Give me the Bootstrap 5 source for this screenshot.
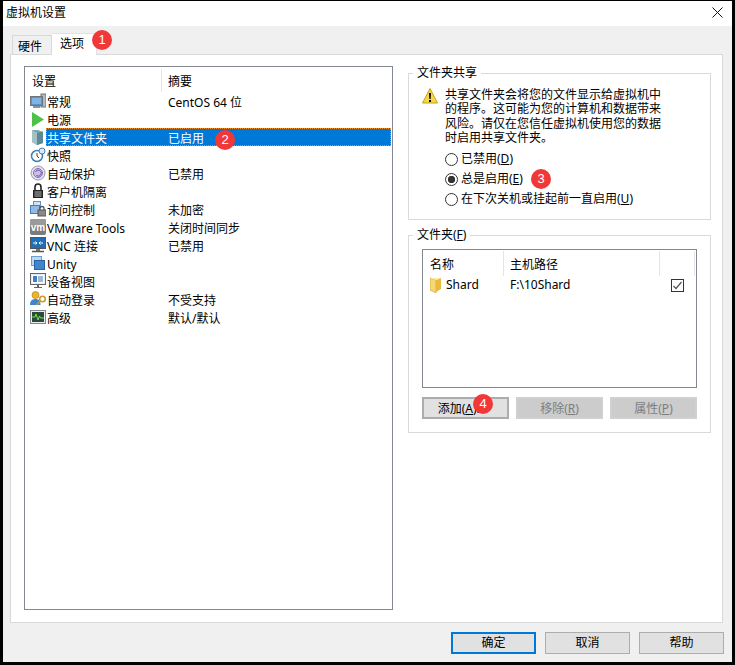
<!DOCTYPE html>
<html lang="zh-CN">
<head>
<meta charset="utf-8">
<title>虚拟机设置</title>
<link href="https://cdn.jsdelivr.net/npm/bootstrap@5.3.0/dist/css/bootstrap.min.css" rel="stylesheet">
<style>
html,body{margin:0;height:665px;overflow:hidden;background:#000}
body{font:12px/18px "Noto Sans","Noto Sans CJK SC",sans-serif;color:#000}
.vm-win{width:735px;height:665px;border:3px solid #000;border-top-width:1px;background:#f0f0f0}
.vm-title{height:25px;background:#fff;padding:0 0 2px 3px}
.vm-close{margin-right:9px}
.vm-strip{height:28px;padding-left:9px;border:0}
.vm-strip .nav-link{position:relative;display:block;height:19px;width:40px;padding:2px 0 0 5px;margin:0;border:1px solid #d9d9d9;border-bottom:0;border-radius:0;background:#f0f0f0;color:#000;font-size:12px;line-height:18px}
.vm-strip .nav-link.active{height:22px;width:45px;margin:0 0 -1px;padding:1px 0 0 8px;background:#fff;border-left:0;color:#000;z-index:2}
.vm-panel{width:713px;height:569px;margin-left:7px;padding:11px 11px 12px 13px;background:#fff;border:1px solid #d9d9d9;gap:15px}
.vm-list{width:369px;height:544px;border:1px solid #828790;background:#fff;flex:none;padding:0;border-radius:0}
.vm-head{height:25px;padding-top:2px;line-height:25px}
.vm-head1{width:137px;padding-left:7px;height:23px;border-right:1px solid #e5e5e5;margin-right:6px}
.vm-row{height:18px;padding:0 1px 0 5px;border:0;background:transparent;border-radius:0;color:#000;font-size:12px}
.vm-row svg{flex:none}
.vm-label{position:relative;flex:1;display:flex;height:18px;padding:2px 0 0 1px;line-height:18px}
.vm-name{width:121px;flex:none;white-space:nowrap}
.vm-sel{background:#0078d7;color:#fff;outline:1px dotted #f08a24;outline-offset:-1px}
.vm-right{width:303px;flex:none;gap:8px}
.vm-group{border:1px solid #d9d9d9;padding:0;margin:0;min-width:0}
.vm-g1{height:154px}
.vm-g2{height:205px}
.vm-group legend{float:none;width:auto;font-size:12px;line-height:14px;padding:0 4px;margin:0 0 0 4px}
.vm-warn{padding:8px 0 0 13px;gap:7px;line-height:14.33px}
.vm-warn p{margin:0;width:217px}
.vm-radios{padding:4px 0 0 36px}
.vm-radio{height:20px;gap:3px;position:relative;margin:0}
.vm-radio input{appearance:none;width:13px;height:13px;border:1px solid #333;border-radius:50%;background:#fff;margin:0;flex:none}
.vm-radio input:checked{background:radial-gradient(circle,#333 0 3.4px,#fff 4px)}
.vm-flist{width:275px;height:139px;margin:7px 0 0 13px;border:1px solid #828790}
.vm-fhead{height:26px;padding:1px 0 0 7px;line-height:28px}
.vm-fc{border-right:1px solid #e5e5e5;height:25px;flex:none}
.vm-fc1{width:74px}.vm-fc2{width:156px;padding-left:6px}.vm-fc3{width:35px}
.vm-frow{height:18px;padding:0 0 0 7px}
.vm-fname{width:74px;gap:5px;flex:none}
.vm-fpath{width:167px;padding-left:6px;flex:none}
.vm-check{width:13px;height:13px;border:1px solid #333;background:#fff;display:flex;flex:none}
.vm-btns{width:275px;margin:9px 0 0 13px;gap:7px}
.vm-btn{position:relative;width:85px;height:22px;padding:0;background:#e1e1e1;border:1px solid #adadad;border-radius:0;color:#000;font-size:12px;line-height:18px;flex:none}
.vm-btns .vm-btn{width:87px;border-width:2px;border-color:#adadad;line-height:18px;padding-top:1px}
.vm-btns .vm-add{padding-right:7px}
.vm-btn:disabled{opacity:1;background:#ccc;border-color:#d0d0d0;color:#7e7e7e}
.vm-default{border:2px solid #0078d7}
.vm-foot{height:39px;padding:9px 8px 0 0;gap:9px}
.vm-dot{position:absolute;width:20px;height:20px;border-radius:50%;background:#f03838;color:#fff;font:13px/20px "Liberation Sans",sans-serif;text-align:center;z-index:3}
.vm-d1{left:40px;top:-4px}
.vm-d2{left:169px;top:2px}
.vm-d3{left:86px;top:0}
.vm-d4{left:49px;top:-5px}
</style>
</head>
<body>
<div class="vm-win d-flex flex-column">
  <div class="vm-title d-flex justify-content-between align-items-center">
    <span>虚拟机设置</span>
    <svg class="vm-close" width="11" height="11" viewBox="0 0 11 11"><path d="M.5.5l10 10M10.500.5l-10 10" stroke="#111" stroke-width="1" fill="none"/></svg>
  </div>
  <ul class="nav nav-tabs vm-strip align-items-end">
    <li class="nav-item"><a class="nav-link" href="#">硬件</a></li>
    <li class="nav-item"><a class="nav-link active" href="#">选项<span class="vm-dot vm-d1">1</span></a></li>
  </ul>
  <div class="vm-panel d-flex">
    <div class="vm-list list-group">
      <div class="vm-head d-flex"><div class="vm-head1">设置</div><div>摘要</div></div>

      <div class="vm-row list-group-item d-flex">
        <svg width="16" height="18" viewBox="0 0 16 18"><rect x="11" y="2" width="5" height="13" fill="#b5b9bd" stroke="#6f7478"/><rect x="0.500" y="4.500" width="12" height="9" fill="#5c93c9" stroke="#6f7478"/><rect x="2" y="6" width="9" height="6" fill="#7fb4e6"/><rect x="3" y="14" width="7" height="2" fill="#8f9498"/></svg>
        <div class="vm-label"><span class="vm-name">常规</span><span>CentOS 64 位</span></div>
      </div>
      <div class="vm-row list-group-item d-flex">
        <svg width="16" height="18" viewBox="0 0 16 18"><path d="M2 2l12 7.500L2 17z" fill="#4fc04a"/></svg>
        <div class="vm-label"><span class="vm-name">电源</span></div>
      </div>
      <div class="vm-row list-group-item d-flex">
        <svg width="16" height="18" viewBox="0 0 16 18"><path d="M2 2h6l5 2v11l-6 2-5-3z" fill="#7fa6ac"/><path d="M7 5l6-1.500V15l-6 2z" fill="#5b8a92"/><path d="M2 2l5 3v12l-5-3z" fill="#a3c0c4"/></svg>
        <div class="vm-label vm-sel"><span class="vm-name">共享文件夹</span><span>已启用</span><span class="vm-dot vm-d2">2</span></div>
      </div>
      <div class="vm-row list-group-item d-flex">
        <svg width="16" height="18" viewBox="0 0 16 18"><circle cx="7" cy="10" r="5.500" fill="#fff" stroke="#3f7fb5" stroke-width="1.500"/><circle cx="12" cy="5" r="3" fill="#dbe9f5" stroke="#4a7ea8"/><path d="M7 7v3l2 2" stroke="#444" fill="none"/></svg>
        <div class="vm-label"><span class="vm-name">快照</span></div>
      </div>
      <div class="vm-row list-group-item d-flex">
        <svg width="16" height="18" viewBox="0 0 16 18"><circle cx="8" cy="9" r="7" fill="#e6e2ee" stroke="#9c9ca6"/><circle cx="8" cy="9" r="4.500" fill="#cbbfe6" stroke="#8a6cc0"/><path d="M5.500 8a3 3 0 1 1 1 3.500" stroke="#6f4fb0" fill="none"/></svg>
        <div class="vm-label"><span class="vm-name">自动保护</span><span>已禁用</span></div>
      </div>
      <div class="vm-row list-group-item d-flex">
        <svg width="16" height="18" viewBox="0 0 16 18"><path d="M5 8V5a3 3 0 0 1 6 0v3" fill="none" stroke="#222" stroke-width="1.600"/><rect x="3" y="8" width="10" height="8" fill="#222"/><path d="M4.500 10h7M4.500 12h7M4.500 14h7" stroke="#bbb"/></svg>
        <div class="vm-label"><span class="vm-name">客户机隔离</span></div>
      </div>
      <div class="vm-row list-group-item d-flex">
        <svg width="16" height="18" viewBox="0 0 16 18"><rect x="3.500" y="1.500" width="7" height="6" fill="#cfe3f6" stroke="#5b93cc"/><rect x="0.500" y="5.500" width="9" height="8" fill="#8fbbe6" stroke="#3f7fc0"/><path d="M10 10V8.500a2 2 0 0 1 4 0V10" fill="none" stroke="#555" stroke-width="1.300"/><rect x="8" y="10" width="8" height="6" fill="#8a8a8a" stroke="#555"/></svg>
        <div class="vm-label"><span class="vm-name">访问控制</span><span>未加密</span></div>
      </div>
      <div class="vm-row list-group-item d-flex">
        <svg width="16" height="18" viewBox="0 0 16 18"><rect x="0" y="1" width="16" height="16" rx="2" fill="#7b7b7b"/><rect x="0" y="1" width="16" height="7" rx="2" fill="#9a9a9a"/><text x="8" y="12.500" text-anchor="middle" font-family="Liberation Sans" font-size="10" font-weight="bold" fill="#fff">vm</text></svg>
        <div class="vm-label"><span class="vm-name">VMware Tools</span><span>关闭时间同步</span></div>
      </div>
      <div class="vm-row list-group-item d-flex">
        <svg width="16" height="18" viewBox="0 0 16 18"><rect x="0.500" y="1.500" width="15" height="11" fill="#1f6fb8" stroke="#555"/><path d="M3 7h4M5.500 5.500L7 7 5.500 8.500M13 7H9M10.500 5.500L9 7l1.500 1.500" stroke="#fff" fill="none"/><path d="M6 13h4v2H6z" fill="#777"/><path d="M2 15.500h12" stroke="#555" stroke-width="1.500"/></svg>
        <div class="vm-label"><span class="vm-name">VNC 连接</span><span>已禁用</span></div>
      </div>
      <div class="vm-row list-group-item d-flex">
        <svg width="16" height="18" viewBox="0 0 16 18"><rect x="1.500" y="2.500" width="10" height="9" fill="#bcd8f2" stroke="#6b9fd0"/><rect x="4.500" y="6.500" width="10" height="9" fill="#3f86cf" stroke="#2a62a0"/></svg>
        <div class="vm-label"><span class="vm-name">Unity</span></div>
      </div>
      <div class="vm-row list-group-item d-flex">
        <svg width="16" height="18" viewBox="0 0 16 18"><rect x="0.500" y="1.500" width="15" height="11" fill="#e8edf2" stroke="#666"/><rect x="2" y="3" width="12" height="8" fill="#fff"/><rect x="3" y="4" width="4" height="6" fill="#3f7fc9"/><path d="M8 5h5M8 7h5M8 9h5" stroke="#3f6fa8"/><path d="M7 13h2v2H7z" fill="#666"/><path d="M4 15.500h8" stroke="#666"/></svg>
        <div class="vm-label"><span class="vm-name">设备视图</span></div>
      </div>
      <div class="vm-row list-group-item d-flex">
        <svg width="16" height="18" viewBox="0 0 16 18"><circle cx="5.500" cy="5" r="3.500" fill="#f0b429" stroke="#a97a10" stroke-width=".6"/><path d="M0 15c0-4 2-6 5.500-6s5 2 5 6z" fill="#3f86cf"/><circle cx="12.500" cy="9" r="2.800" fill="none" stroke="#c99a2e" stroke-width="1.600"/><path d="M10.500 11l-4 4" stroke="#c99a2e" stroke-width="1.600"/></svg>
        <div class="vm-label"><span class="vm-name">自动登录</span><span>不受支持</span></div>
      </div>
      <div class="vm-row list-group-item d-flex">
        <svg width="16" height="18" viewBox="0 0 16 18"><rect x="0.500" y="2.500" width="15" height="13" fill="#e8edf0" stroke="#7e8a90"/><rect x="2" y="4" width="12" height="10" fill="#2e4a36"/><path d="M2 9h3l1-3 2 6 1.500-4 1 2H14" stroke="#6fe05a" fill="none"/></svg>
        <div class="vm-label"><span class="vm-name">高级</span><span>默认/默认</span></div>
      </div>
    </div>

    <div class="vm-right d-flex flex-column">
      <fieldset class="vm-group vm-g1">
        <legend>文件夹共享</legend>
        <div class="vm-warn d-flex">
          <svg class="flex-none" width="16" height="16" viewBox="0 0 16 16"><path d="M8 .5L15.500 15H.5z" fill="#f6d64a" stroke="#c4a21a" stroke-linejoin="round"/><path d="M7 5h2l-.4 6H7.400z" fill="#000"/><rect x="7" y="12" width="2" height="2" fill="#000"/></svg>
          <p>共享文件夹会将您的文件显示给虚拟机中的程序。这可能为您的计算机和数据带来风险。请仅在您信任虚拟机使用您的数据时启用共享文件夹。</p>
        </div>
        <div class="vm-radios">
          <label class="vm-radio d-flex align-items-center"><input type="radio" name="vmshare"><span>已禁用(<u>D</u>)</span></label>
          <label class="vm-radio d-flex align-items-center"><input type="radio" name="vmshare" checked><span>总是启用(<u>E</u>)</span><span class="vm-dot vm-d3">3</span></label>
          <label class="vm-radio d-flex align-items-center"><input type="radio" name="vmshare"><span>在下次关机或挂起前一直启用(<u>U</u>)</span></label>
        </div>
      </fieldset>

      <fieldset class="vm-group vm-g2">
        <legend>文件夹(<u>F</u>)</legend>
        <div class="vm-flist">
          <div class="vm-fhead d-flex"><div class="vm-fc vm-fc1">名称</div><div class="vm-fc vm-fc2">主机路径</div><div class="vm-fc vm-fc3"></div></div>
          <div class="vm-frow d-flex align-items-center">
            <div class="vm-fname d-flex align-items-center">
              <svg width="11" height="16" viewBox="0 0 11 16"><path d="M0 1l6 2v13l-6-3z" fill="#f7d774" stroke="#c9a030" stroke-width=".6"/><path d="M6 3l5-2v11l-5 3z" fill="#e8b93f"/><path d="M0 1h8l3 0-5 2z" fill="#fbe8a8"/></svg>
              <span>Shard</span>
            </div>
            <div class="vm-fpath">F:\10Shard</div>
            <div class="vm-check"><svg width="11" height="11" viewBox="0 0 11 11"><path d="M1.500 6l2.500 2.500L9.500 2" stroke="#555" stroke-width="1.200" fill="none"/></svg></div>
          </div>
        </div>
        <div class="vm-btns d-flex">
          <button type="button" class="btn vm-btn vm-add">添加(<u>A</u>)...<span class="vm-dot vm-d4">4</span></button>
          <button type="button" class="btn vm-btn" disabled>移除(<u>R</u>)</button>
          <button type="button" class="btn vm-btn" disabled>属性(<u>P</u>)</button>
        </div>
      </fieldset>
    </div>
  </div>
  <div class="vm-foot d-flex justify-content-end">
    <button type="button" class="btn vm-btn vm-default">确定</button>
    <button type="button" class="btn vm-btn">取消</button>
    <button type="button" class="btn vm-btn">帮助</button>
  </div>
</div>
</body>
</html>
